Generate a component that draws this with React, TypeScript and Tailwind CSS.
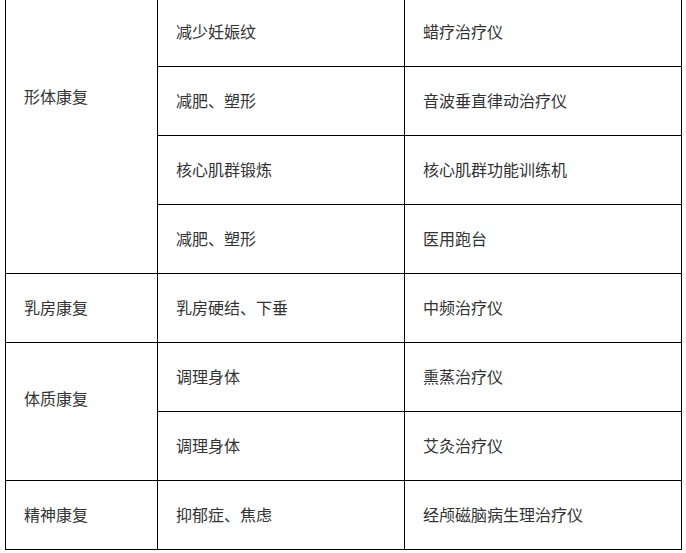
const rows: { group?: string; span?: number; pad?: string; item: string; device: string }[] = [
  { group: '形体康复', span: 4, pad: 'pb-[80px]', item: '减少妊娠纹', device: '蜡疗治疗仪' },
  { item: '减肥、塑形', device: '音波垂直律动治疗仪' },
  { item: '核心肌群锻炼', device: '核心肌群功能训练机' },
  { item: '减肥、塑形', device: '医用跑台' },
  { group: '乳房康复', span: 1, pad: 'pb-[2px]', item: '乳房硬结、下垂', device: '中频治疗仪' },
  { group: '体质康复', span: 2, pad: 'pb-[28px]', item: '调理身体', device: '熏蒸治疗仪' },
  { item: '调理身体', device: '艾灸治疗仪' },
  { group: '精神康复', span: 1, pad: 'pb-[2px]', item: '抑郁症、焦虑', device: '经颅磁脑病生理治疗仪' },
];

export default function App() {
  return (
    <div className="w-[686px] h-[553px] overflow-hidden bg-white">
      <table
        className="mt-[-3px] ml-[5px] w-[677px] border-collapse text-[16px] leading-[22px] text-[#333]"
        style={{ fontFamily: '"Noto Sans CJK SC", "Noto Sans", sans-serif' }}
      >
        <colgroup>
          <col className="w-[152px]" />
          <col className="w-[247px]" />
          <col />
        </colgroup>
        <tbody>
          {rows.map((r, i) => (
            <tr key={i} className="h-[69px]">
              {r.group && (
                <td rowSpan={r.span} className={`border border-black pl-[18px] align-middle ${r.pad}`}>
                  {r.group}
                </td>
              )}
              <td className="border border-black pl-[18px] pb-[2px] align-middle">{r.item}</td>
              <td className="border border-black pl-[18px] pb-[2px] align-middle">{r.device}</td>
            </tr>
          ))}
        </tbody>
      </table>
    </div>
  );
}
